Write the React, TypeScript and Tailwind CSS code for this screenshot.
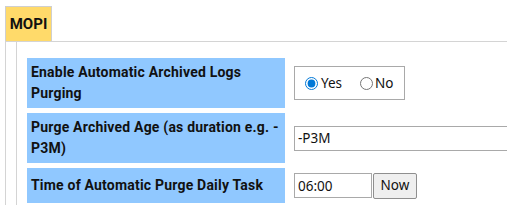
export default function App() {
  const labelCls =
    "flex items-center bg-[#90c8ff] px-[4px] font-['Roboto',sans-serif] text-[14px] font-bold leading-[21px] tracking-[0.2px] text-[#111]";
  const ctrlFont = "font-['Noto_Sans','Open_Sans',sans-serif] text-[13.5px]";

  return (
    <div className="h-[205px] w-[507px] overflow-hidden bg-white">
      <div className="flex pl-[5px] pt-[6px]">
        <div className="flex h-[35px] w-[47px] items-center justify-center border border-b-0 border-[#cfcfcf] bg-[#ffda6a] font-['Roboto',sans-serif] text-[15px] font-bold text-[#111]">
          MOPI
        </div>
      </div>
      <div className="ml-[5px] h-full border-l border-t border-[#d4d4d4] pl-[10px]">
        <div className="h-full border-l border-[#d4d4d4] pl-[10px] pt-[16px]">
          <div className="grid grid-cols-[258px_1fr] gap-x-[5px] gap-y-[5px]">
            <div className={`${labelCls} h-[50px]`}>
              <span className="whitespace-nowrap">
                Enable Automatic Archived Logs
                <br />
                Purging
              </span>
            </div>
            <div className="flex items-center pl-[4px]">
              <div
                className={`flex h-[34px] w-[111px] items-center gap-[4px] border border-[#a9a9a9] pl-[10px] ${ctrlFont} text-[#111]`}
              >
                <label className="flex items-center gap-[3px]">
                  <input
                    type="radio"
                    name="purge"
                    defaultChecked
                    className="m-0 h-[13px] w-[13px] accent-[#0078d7]"
                  />
                  <span>Yes</span>
                </label>
                <label className="ml-[14px] flex items-center gap-[2px]">
                  <input
                    type="radio"
                    name="purge"
                    className="m-0 h-[13px] w-[13px] accent-[#0078d7]"
                  />
                  <span>No</span>
                </label>
              </div>
            </div>

            <div className={`${labelCls} h-[50px]`}>
              <span className="whitespace-nowrap">
                Purge Archived Age (as duration e.g. -
                <br />
                P3M)
              </span>
            </div>
            <div className="flex items-center pl-[4px]">
              <input
                type="text"
                defaultValue="-P3M"
                className={`h-[25px] w-[260px] shrink-0 border border-[#a9a9a9] px-[3px] ${ctrlFont} text-[#111] outline-none`}
              />
            </div>

            <div className={`${labelCls} h-[35px]`}>
              Time of Automatic Purge Daily Task
            </div>
            <div className="flex items-center pl-[4px]">
              <input
                type="text"
                defaultValue="06:00"
                className={`h-[25px] w-[78px] border border-[#a9a9a9] px-[3px] ${ctrlFont} text-[#111] outline-none`}
              />
              <button
                className={`ml-[1px] h-[26px] w-[44px] rounded-[2px] border border-[#8f8f8f] bg-[#efefef] ${ctrlFont} text-[#111]`}
              >
                Now
              </button>
            </div>
          </div>
        </div>
      </div>
    </div>
  );
}
